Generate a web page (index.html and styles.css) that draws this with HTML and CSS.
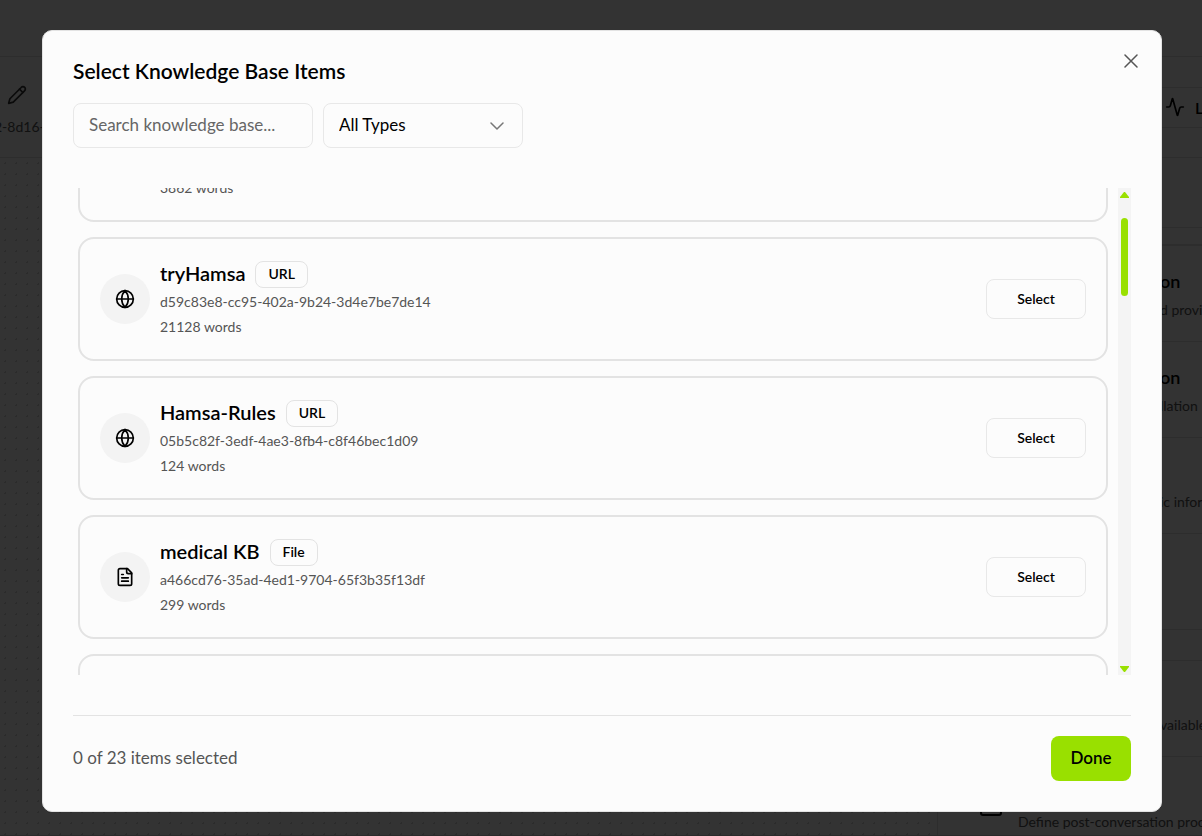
FILE: index.html
```html
<!DOCTYPE html>
<html lang="en">
<head>
    <meta charset="UTF-8">
    <meta name="viewport" content="width=device-width, initial-scale=1.0">
    <title>Select Knowledge Base Items</title>
    <link rel="stylesheet" href="styles.css">
</head>
<body>
    <!-- Agent editor -->
    <div class="page">
        <div class="topbar"></div>
        <header class="agent-header">
            <div class="agent">
                <svg class="pencil" viewBox="0 0 24 24"><path d="M17 3a2.85 2.83 0 1 1 4 4L7.500 20.500 2 22l1.500-5.500Z"/><path d="m15 5 4 4"/></svg>
                <span class="agent-id">2-8d16-</span>
            </div>
            <button class="logs" type="button">
                <svg viewBox="0 0 24 24"><path d="M22 12h-2.480a2 2 0 0 0-1.930 1.460l-2.350 8.360a.25.25 0 0 1-.48 0L9.240 2.180a.25.25 0 0 0-.48 0l-2.350 8.360A2 2 0 0 1 4.490 12H2"/></svg>
                Logs
            </button>
        </header>
        <div class="workspace">
            <div class="canvas"></div>
            <aside class="panel">
                <div class="tabs"></div>
                <div class="group">
                    <div class="row"><h3>on</h3><p>d provide</p></div>
                    <div class="row"><h3>on</h3><p>llation</p></div>
                    <div class="row"><h3></h3><p>ic information</p></div>
                    <div class="row"></div>
                </div>
                <div class="group tools">
                    <div class="row"><h3></h3><p>vailable</p></div>
                    <div class="row last">
                        <svg viewBox="0 0 24 24"><rect x="2" y="3" width="20" height="19" rx="2"/></svg>
                        <p>Define post-conversation processing</p>
                    </div>
                </div>
            </aside>
        </div>
    </div>

    <!-- Dialog -->
    <div class="overlay">
        <div class="modal" role="dialog" aria-modal="true" aria-labelledby="modal-title">
            <button class="close" type="button" aria-label="Close">
                <svg viewBox="0 0 14 14"><path d="M1 1l12 12M13 1L1 13"/></svg>
            </button>
            <h2 id="modal-title">Select Knowledge Base Items</h2>
            <div class="filters">
                <input class="search" type="text" placeholder="Search knowledge base..." aria-label="Search knowledge base">
                <div class="select-wrap">
                    <select class="types" aria-label="Type">
                        <option>All Types</option>
                        <option>URL</option>
                        <option>File</option>
                    </select>
                    <svg class="chevron" viewBox="0 0 14 8"><path d="M1 1l6 6 6-6"/></svg>
                </div>
            </div>

            <div class="list-area">
                <div class="list" id="kb-list">
                    <div class="card">
                        <div class="card-icon"><svg viewBox="0 0 24 24"><circle cx="12" cy="12" r="10"/><path d="M12 2a14.500 14.500 0 0 0 0 20 14.500 14.500 0 0 0 0-20M2 12h20"/></svg></div>
                        <div class="card-body">
                            <div class="card-name"><h3>Hamsa</h3><span class="badge">URL</span></div>
                            <p>&nbsp;</p>
                            <p>3862 words</p>
                        </div>
                        <button class="select-btn" type="button">Select</button>
                    </div>
                    <div class="card">
                        <div class="card-icon"><svg viewBox="0 0 24 24"><circle cx="12" cy="12" r="10"/><path d="M12 2a14.500 14.500 0 0 0 0 20 14.500 14.500 0 0 0 0-20M2 12h20"/></svg></div>
                        <div class="card-body">
                            <div class="card-name"><h3>tryHamsa</h3><span class="badge">URL</span></div>
                            <p>d59c83e8-cc95-402a-9b24-3d4e7be7de14</p>
                            <p>21128 words</p>
                        </div>
                        <button class="select-btn" type="button">Select</button>
                    </div>
                    <div class="card">
                        <div class="card-icon"><svg viewBox="0 0 24 24"><circle cx="12" cy="12" r="10"/><path d="M12 2a14.500 14.500 0 0 0 0 20 14.500 14.500 0 0 0 0-20M2 12h20"/></svg></div>
                        <div class="card-body">
                            <div class="card-name"><h3>Hamsa-Rules</h3><span class="badge">URL</span></div>
                            <p>05b5c82f-3edf-4ae3-8fb4-c8f46bec1d09</p>
                            <p>124 words</p>
                        </div>
                        <button class="select-btn" type="button">Select</button>
                    </div>
                    <div class="card">
                        <div class="card-icon"><svg viewBox="0 0 24 24"><path d="M15 2H6a2 2 0 0 0-2 2v16a2 2 0 0 0 2 2h12a2 2 0 0 0 2-2V7Z"/><path d="M14 2v4a2 2 0 0 0 2 2h4M10 9H8M16 13H8M16 17H8"/></svg></div>
                        <div class="card-body">
                            <div class="card-name"><h3>medical KB</h3><span class="badge">File</span></div>
                            <p>a466cd76-35ad-4ed1-9704-65f3b35f13df</p>
                            <p>299 words</p>
                        </div>
                        <button class="select-btn" type="button">Select</button>
                    </div>
                    <div class="card"></div>
                </div>
                <div class="scrollbar">
                    <svg class="arrow" viewBox="0 0 9 6"><path d="M4 0h1l4 5v1H0V5z"/></svg>
                    <div class="thumb"></div>
                    <svg class="arrow" viewBox="0 0 9 6"><path d="M0 0h9v1L5 6H4L0 1z"/></svg>
                </div>
            </div>

            <div class="modal-footer">
                <span class="count">0 of 23 items selected</span>
                <button class="done" type="button">Done</button>
            </div>
        </div>
    </div>

    <script src="script.js"></script>
</body>
</html>
```
FILE: styles.css
```css
* {
    box-sizing: border-box;
}

body, html {
    margin: 0;
    height: 100%;
    overflow: hidden;
    font-family: Lato, "Noto Sans", sans-serif;
    font-size: 17px;
    color: #000;
    background-color: #fcfcfc;
}

h2, h3, p {
    margin: 0;
}

h2, h3 {
    font-weight: 600;
}

button, input, select {
    font-family: inherit;
    color: inherit;
}

svg {
    fill: none;
    stroke: currentColor;
    stroke-width: 2;
    stroke-linecap: round;
    stroke-linejoin: round;
}

/* page behind the dialog */
.page {
    height: 100%;
    display: flex;
    flex-direction: column;
    border-bottom: 1px solid #d5d5d5;
}

.topbar {
    flex: 0 0 57px;
    border-bottom: 1px solid #e1e1e1;
}

.agent-header {
    flex: 0 0 101px;
    display: flex;
    justify-content: space-between;
    align-items: center;
    border-bottom: 1px solid #e1e1e1;
}

.agent {
    display: flex;
    flex-direction: column;
    gap: 12px;
    padding-top: 7px;
}

.pencil {
    width: 20px;
    height: 20px;
    margin-left: 7px;
    color: #333;
}

.agent-id {
    font-size: 14px;
    line-height: 20px;
    margin-left: -6px;
    color: #555;
}

.logs {
    display: flex;
    align-items: center;
    gap: 10px;
    width: 60px;
    height: 41px;
    padding: 0 0 0 22px;
    border: 1px solid #e1e1e1;
    border-right: 0;
    background: none;
    font-size: 16px;
    font-weight: 600;
    overflow: hidden;
}

.logs svg {
    flex: 0 0 20px;
    height: 20px;
}

.workspace {
    flex: 1;
    min-height: 0;
    display: flex;
}

.canvas {
    flex: 1;
    background-image: radial-gradient(circle, #d8d8d8 1px, transparent 1px);
    background-size: 11px 11px;
}

.panel {
    flex: 0 0 265px;
    border-left: 1px solid #e1e1e1;
    overflow: hidden;
}

.tabs {
    height: 70px;
    border-bottom: 1px solid #e1e1e1;
}

.group {
    margin-top: 16px;
    border-top: 2px solid #e1e1e1;
}

.tools {
    margin-top: 30px;
    border-top-width: 1px;
}

.row {
    height: 96px;
    padding: 20px 0 0 222px;
    border-bottom: 1px solid #e1e1e1;
    white-space: nowrap;
    overflow: hidden;
}

.row h3 {
    height: 30px;
    font-size: 18px;
    line-height: 30px;
}

.row p {
    font-size: 14px;
    line-height: 28px;
    color: #555;
}

.last {
    display: flex;
    gap: 15px;
    padding: 36px 0 0 41px;
}

.last svg {
    flex: 0 0 24px;
    height: 24px;
}

.last p {
    padding-top: 15px;
}

/* dialog */
.overlay {
    position: fixed;
    inset: 0;
    display: flex;
    padding: 30px 40px 24px 42px;
    background-color: rgba(0, 0, 0, 0.8);
}

.modal {
    position: relative;
    flex: 1;
    min-width: 0;
    display: flex;
    flex-direction: column;
    padding: 24px 30px 30px;
    border: 1px solid #e3e3e3;
    border-radius: 10px;
    background-color: #fcfcfc;
}

.modal h2 {
    font-size: 21px;
    line-height: 32px;
}

.close {
    position: absolute;
    top: 20px;
    right: 20px;
    width: 20px;
    height: 20px;
    padding: 3px;
    border: none;
    background: none;
    color: #555;
    cursor: pointer;
}

.close svg {
    display: block;
    width: 14px;
    height: 14px;
    stroke-width: 1.500;
}

.filters {
    display: flex;
    gap: 10px;
    margin-top: 16px;
}

.search, .types {
    height: 45px;
    padding: 0 15px 2px;
    border: 1px solid #e8e8e8;
    border-radius: 8px;
    background-color: #fcfcfc;
    font-size: 17px;
}

.search {
    width: 240px;
}

.search::placeholder {
    color: #666;
}

.select-wrap {
    position: relative;
    width: 200px;
}

.types {
    width: 100%;
    appearance: none;
}

.chevron {
    position: absolute;
    top: 19px;
    right: 19px;
    width: 14px;
    height: 8px;
    color: #777;
    stroke-width: 1.500;
    pointer-events: none;
}

.list-area {
    flex: 1;
    min-height: 0;
    display: flex;
    gap: 10px;
    margin: 40px 0;
}

.list {
    flex: 1;
    display: flex;
    flex-direction: column;
    gap: 15px;
    padding: 5px 0 5px 5px;
    overflow-y: auto;
    scrollbar-width: none;
}

.card {
    flex: 0 0 124px;
    display: flex;
    align-items: center;
    gap: 10px;
    padding: 20px;
    border: 2px solid #e3e3e3;
    border-radius: 16px;
}

.card-icon {
    display: flex;
    align-items: center;
    justify-content: center;
    width: 50px;
    height: 50px;
    border-radius: 50%;
    background-color: #f3f3f3;
}

.card-icon svg {
    width: 20px;
    height: 20px;
}

.card-body {
    flex: 1;
}

.card-name {
    display: flex;
    align-items: center;
    gap: 10px;
    height: 30px;
}

.card-name h3 {
    padding-bottom: 2px;
    font-size: 20px;
    line-height: 28px;
}

.badge {
    padding: 0 12px 2px;
    border: 1px solid #e3e3e3;
    border-radius: 8px;
    font-size: 14px;
    font-weight: 600;
    line-height: 23px;
}

.card-body p {
    font-size: 14px;
    line-height: 25px;
    color: #555;
}

.select-btn {
    width: 100px;
    height: 40px;
    padding-bottom: 3px;
    border: 1px solid #e8e8e8;
    border-radius: 8px;
    background-color: #fcfcfc;
    font-size: 14px;
    font-weight: 600;
    cursor: pointer;
}

.scrollbar {
    display: flex;
    flex-direction: column;
    align-items: center;
    width: 13px;
    padding: 4px 0 3px;
    background-color: #f4f4f4;
}

.arrow {
    width: 9px;
    height: 6px;
    fill: #99e000;
    stroke: none;
}

.thumb {
    width: 7px;
    height: 78px;
    margin: 20px 0 auto;
    border-radius: 4px;
    background-color: #99e000;
}

.modal-footer {
    display: flex;
    justify-content: space-between;
    align-items: center;
    padding-top: 20px;
    border-top: 1px solid #e3e3e3;
    color: #555;
}

.count {
    padding-bottom: 2px;
}

.done {
    width: 80px;
    height: 45px;
    padding-bottom: 3px;
    border: none;
    border-radius: 8px;
    background-color: #99e000;
    color: #000;
    font-size: 17px;
    font-weight: 600;
    cursor: pointer;
}
```
FILE: script.js
```js
// open the list just below its first card's title
document.getElementById('kb-list').scrollTop = 95;
```
